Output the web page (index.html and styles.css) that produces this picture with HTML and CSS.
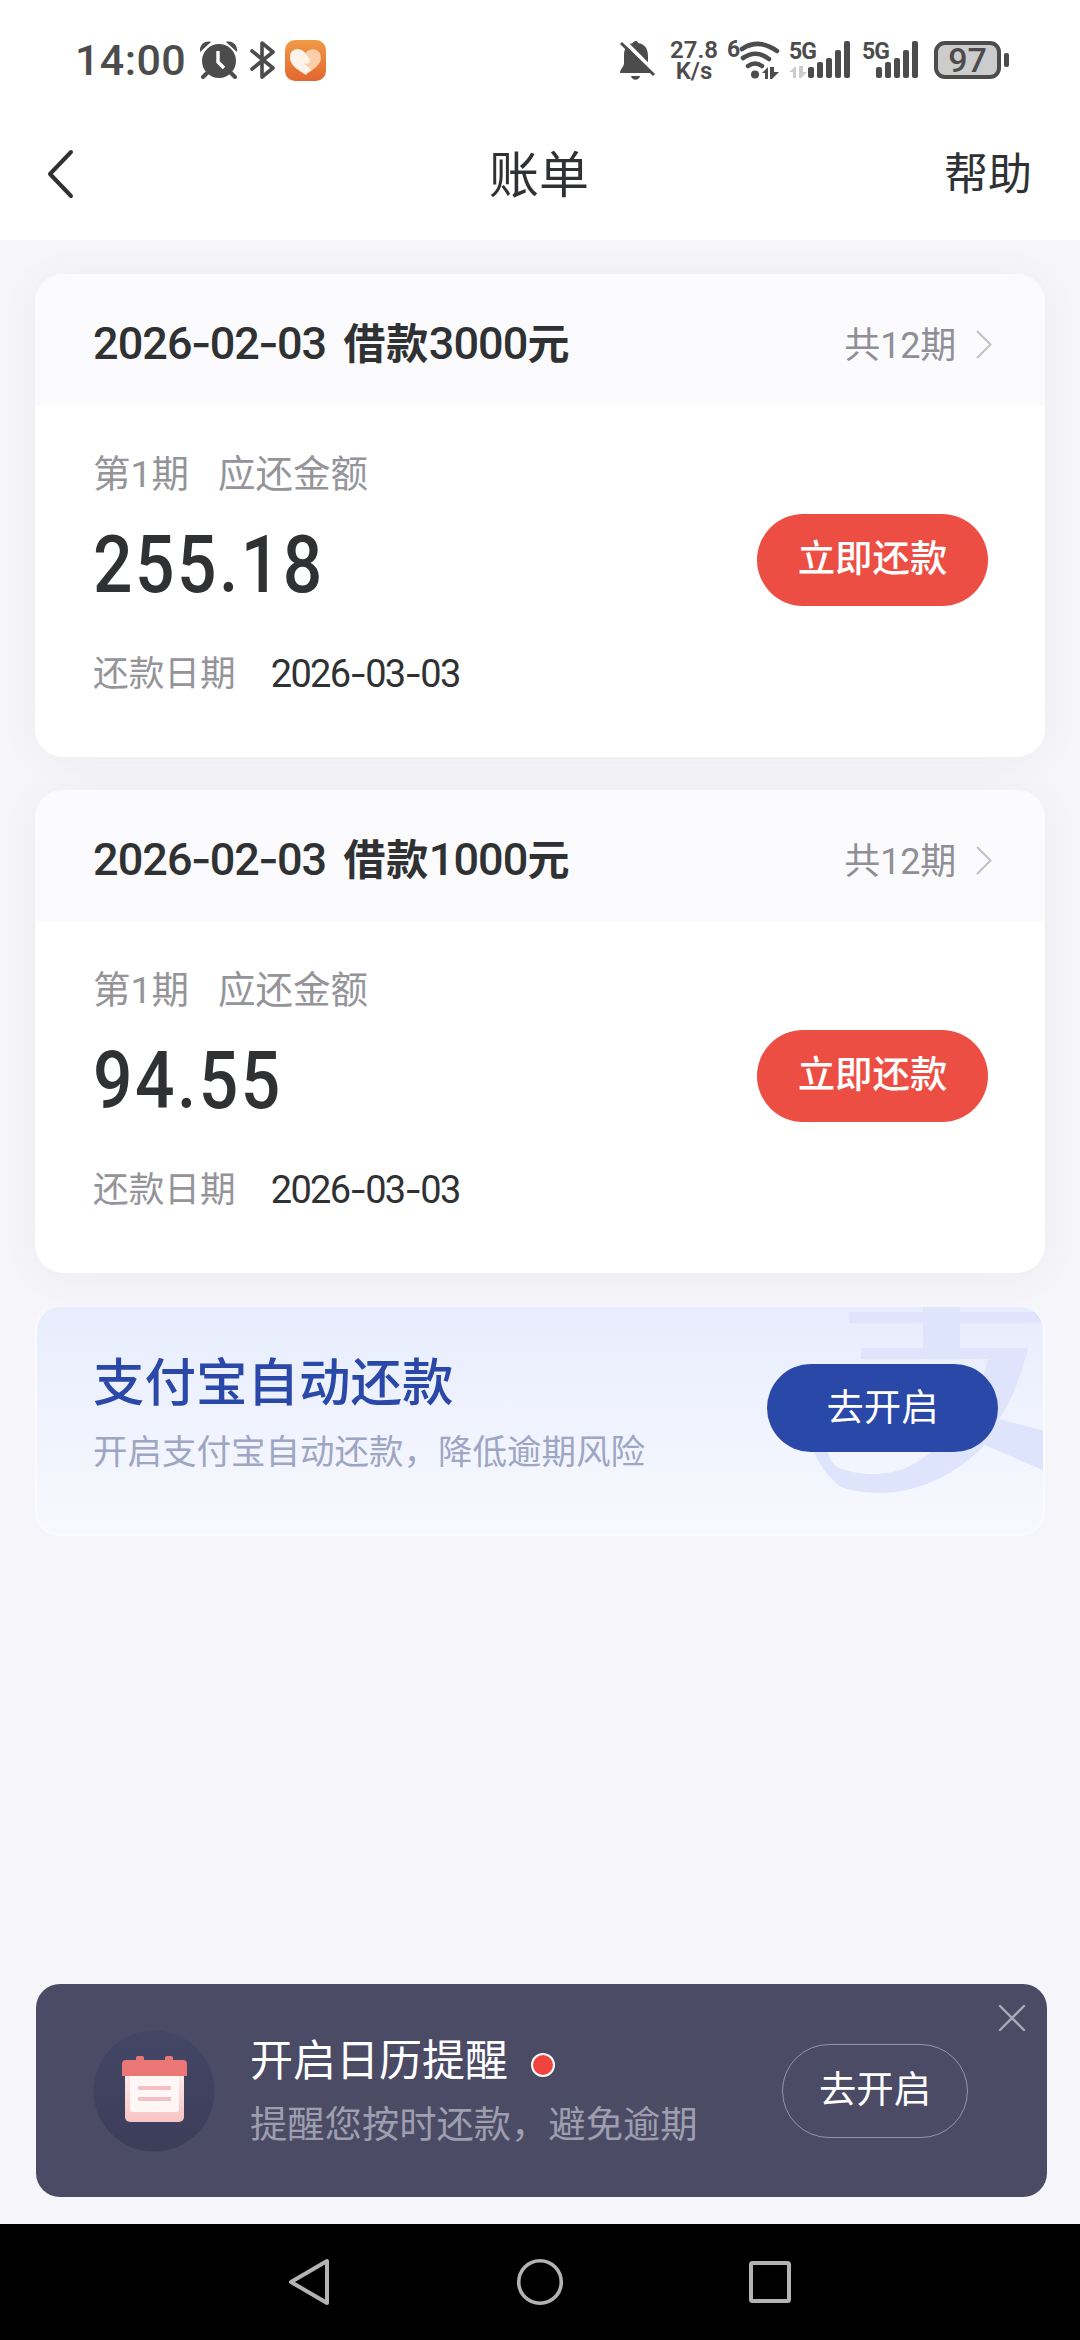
FILE: index.html
```html
<!DOCTYPE html>
<html lang="zh-CN">
<head>
<meta charset="utf-8">
<title>账单</title>
<link rel="stylesheet" href="styles.css">
</head>
<body>
<div class="screen">
  <div class="status">
    <span class="clock">14:00</span>
    <svg class="ic-alarm" width="38" height="38" viewBox="0 0 38 38">
      <g fill="#4c4c4c"><circle cx="19" cy="20" r="17"/><path d="M0 11C-1 4 5-1 11 1zM37 11C38 4 32-1 26 1z"/></g>
      <path d="M7 32l-4 4M31 32l4 4" stroke="#4c4c4c" stroke-width="4" stroke-linecap="round"/>
      <path d="M18 10v11l6 6" stroke="#fff" stroke-width="3.4" fill="none"/>
    </svg>
    <svg class="ic-bt" width="26" height="38" viewBox="0 0 26 38">
      <path d="M2 10l21 17-11 9V2l11 9L2 28" fill="none" stroke="#4c4c4c" stroke-width="3.6" stroke-linejoin="round" stroke-linecap="round"/>
    </svg>
    <svg class="ic-heart" width="41" height="41" viewBox="0 0 41 41">
      <defs><linearGradient id="hg" x1="0" y1="0" x2="0" y2="1"><stop offset="0" stop-color="#f19a46"/><stop offset="1" stop-color="#e2672f"/></linearGradient></defs>
      <rect width="41" height="41" rx="10" fill="url(#hg)"/>
      <path d="M20.500 13C25 7 36 8 36 18c0 6-8 12-15.500 17C13 30 5 25 5 17 5 8 16 7 20.500 13z" fill="#f9cfaa"/>
      <path d="M20.500 34C13 30 5 25 5 17 5 9 14 7 19 12l5 6c3 4-2 8-6 4l8 8z" fill="#fdf3ea"/>
    </svg>
    <span class="grow"></span>
    <svg class="ic-bell" width="38" height="40" viewBox="0 0 38 40">
      <path d="M17 1c1.500 0 2 1 2 2 7 1 10 6 10 13v7c0 5 5 6 5 10H1c0-4 4-6 4-10v-8C5 8 9 4 14 3c0-1 1-2 3-2zM12 36h9c-1 5-8 5-9 0z" fill="#4c4c4c"/>
      <path d="M3-1l36 36" stroke="#fff" stroke-width="4"/><path d="M2 3l33 32" stroke="#4c4c4c" stroke-width="3"/>
    </svg>
    <span class="rate"><span>27.8</span><span>K/s</span></span>
    <svg class="ic-wifi" width="54" height="42" viewBox="-2 0 54 42">
      <text x="-1" y="18" class="tiny">6</text>
      <g fill="none" stroke="#4c4c4c" stroke-width="4.600" stroke-linecap="round"><path d="M14 10Q31-1 49 12"/><path d="M15 19Q28 10 41 20"/><path d="M20 27Q27 22 34 27"/></g>
      <circle cx="27" cy="35.500" r="4" fill="#4c4c4c"/>
      <path d="M34 34l6-6v12h-3v-6zM42 28v12h2l7-7h-5v-5z" fill="#4c4c4c"/>
    </svg>
    <svg class="ic-sim1" width="62" height="42" viewBox="0 0 62 42">
      <text x="0" y="20" class="tiny">5G</text>
      <path d="M0 33l7-6v12H4v-6zM10 27v12h2l6-6h-4v-6z" fill="#ccc"/>
      <g fill="#4c4c4c"><rect x="19" y="28" width="6" height="11" rx="2"/><rect x="28" y="23" width="6" height="16" rx="2"/><rect x="37" y="19" width="6" height="20" rx="2"/><rect x="46" y="11" width="6" height="28" rx="2"/><rect x="55" y="2" width="6" height="37" rx="2"/></g>
    </svg>
    <svg class="ic-sim2" width="57" height="42" viewBox="0 0 57 42">
      <text x="0" y="20" class="tiny">5G</text>
      <g fill="#4c4c4c"><rect x="14" y="28" width="6" height="11" rx="2"/><rect x="23" y="23" width="6" height="16" rx="2"/><rect x="32" y="19" width="6" height="20" rx="2"/><rect x="41" y="11" width="6" height="28" rx="2"/><rect x="50" y="2" width="6" height="37" rx="2"/></g>
    </svg>
    <span class="battery">97</span><span class="nub"></span>
  </div>

  <header class="bar">
    <svg class="back" width="30" height="50" viewBox="0 0 30 50"><path d="M25 3L4 25l21 22" fill="none" stroke="#303133" stroke-width="4" stroke-linecap="round" stroke-linejoin="round"/></svg>
    <h1 class="title">账单</h1>
    <span class="help">帮助</span>
  </header>

  <main class="content">
    <section class="card">
      <div class="head">
        <h2 class="loan">2026<i>-</i>02<i>-</i>03 <b class="kind">借款</b>3000<b>元</b></h2>
        <span class="terms">共12期</span>
        <svg class="more" width="16" height="29" viewBox="0 0 16 29"><path d="M1 1l13.500 13.500L1 28" fill="none" stroke="#c0c0c5" stroke-width="2"/></svg>
      </div>
      <div class="body">
        <div class="info">
          <p class="label"><span>第1期</span><span>应还金额</span></p>
          <p class="amount">255.18</p>
          <p class="due"><span>还款日期</span><time>2026<i>-</i>03<i>-</i>03</time></p>
        </div>
        <button class="pay">立即还款</button>
      </div>
    </section>

    <section class="card">
      <div class="head">
        <h2 class="loan">2026<i>-</i>02<i>-</i>03 <b class="kind">借款</b>1000<b>元</b></h2>
        <span class="terms">共12期</span>
        <svg class="more" width="16" height="29" viewBox="0 0 16 29"><path d="M1 1l13.500 13.500L1 28" fill="none" stroke="#c0c0c5" stroke-width="2"/></svg>
      </div>
      <div class="body">
        <div class="info">
          <p class="label"><span>第1期</span><span>应还金额</span></p>
          <p class="amount">94.55</p>
          <p class="due"><span>还款日期</span><time>2026<i>-</i>03<i>-</i>03</time></p>
        </div>
        <button class="pay">立即还款</button>
      </div>
    </section>

    <section class="auto">
      <svg class="mark" width="230" height="200" viewBox="777 0 230 200">
        <path fill="#dde4fb" d="M813 5h74V0h37v5h85v11h-85v25h68C984 72 975 95 963 112L1009 124v40L949 138C915 172 875 187 840 186 825 185 812 183 805 180 793 171 784 159 777 143V130h10c4 14 6 24 14 30 22 10 54 9 73-1 38-20 66-62 78-107H825V41h62V16h-74z"/>
      </svg>
      <div class="auto-text">
        <h3>支付宝自动还款</h3>
        <p>开启支付宝自动还款，降低逾期风险</p>
      </div>
      <button class="enable">去开启</button>
    </section>
  </main>

  <aside class="remind">
    <svg class="cal" width="122" height="122" viewBox="0 0 122 122">
      <defs>
        <linearGradient id="cb" x1="0" y1="0" x2="0" y2="1"><stop offset="0" stop-color="#444666"/><stop offset="1" stop-color="#3b3d59"/></linearGradient>
        <linearGradient id="pg" x1="0" y1="0" x2="0" y2="1"><stop offset="0" stop-color="#fdeeec"/><stop offset="1" stop-color="#f7c3c3"/></linearGradient>
      </defs>
      <circle cx="61" cy="61" r="60.500" fill="url(#cb)"/>
      <rect x="32" y="40" width="59" height="52" rx="5" fill="url(#pg)"/>
      <rect x="37" y="42" width="49" height="40" rx="3" fill="#fff7f5"/>
      <path d="M33 30h10v-2q0-2 2-2h4q2 0 2 2v2h21v-2q0-2 2-2h4q2 0 2 2v2h10q4 0 4 4v12H29V34q0-4 4-4z" fill="#ea7775"/>
      <path d="M45 58h33M45 69h33" stroke="#f3c1c3" stroke-width="4"/>
    </svg>
    <div class="remind-text">
      <h3>开启日历提醒<span class="dot"></span></h3>
      <p>提醒您按时还款，避免逾期</p>
    </div>
    <button class="ghost">去开启</button>
    <svg class="close" width="28" height="28" viewBox="0 0 28 28"><path d="M2 2l24 24M26 2L2 26" stroke="#a9a9b8" stroke-width="2.400" stroke-linecap="round"/></svg>
  </aside>

  <nav class="nav">
    <svg width="48" height="50" viewBox="0 0 48 50"><path d="M41 4v42L5 25z" fill="none" stroke="#b3b3b3" stroke-width="4" stroke-linejoin="round"/></svg>
    <svg width="50" height="50" viewBox="0 0 50 50"><circle cx="25" cy="25" r="21.300" fill="none" stroke="#b3b3b3" stroke-width="3.600"/></svg>
    <svg width="48" height="50" viewBox="0 0 48 50"><rect x="5" y="6" width="38" height="38" rx="1.500" fill="none" stroke="#b3b3b3" stroke-width="4"/></svg>
  </nav>
</div>
</body>
</html>
```
FILE: styles.css
```css
* { box-sizing: border-box; margin: 0; padding: 0; }
body {
  width: 1080px;
  font-family: Roboto, "Noto Sans CJK SC", sans-serif;
  color: #303133;
  background: #f5f5fa;
}
svg { display: block; flex: none; overflow: hidden; }
button { border: 0; font-family: inherit; }
i { font-style: normal; font-family: Inter, sans-serif; }

.screen { width: 1080px; height: 2340px; display: flex; flex-direction: column; }

.status { height: 120px; padding: 0 71px 0 75px; display: flex; align-items: center; background: #fff; color: #4c4c4c; flex: none; }
.clock { width: 125px; font-size: 43px; font-weight: 500; letter-spacing: .4px; line-height: 60px; }
.ic-bt { margin-left: 12px; }
.ic-heart { margin-left: 9px; }
.grow { flex: 1; }
.rate { width: 54px; margin: 2px 5px 0 10px; display: flex; flex-direction: column; align-items: center; font-size: 24px; line-height: 21px; font-weight: 600; }
.tiny { font: 700 23px Roboto, sans-serif; fill: #4c4c4c; letter-spacing: -1px; }
.ic-sim1 { margin-left: 9px; }
.ic-sim2 { margin-left: 11px; }
.battery { width: 67px; height: 38px; margin-left: 15px; border: 4px solid #4c4c4c; border-radius: 11px; background: #ccc; text-align: center; font-size: 34px; line-height: 31px; font-weight: 500; }
.nub { width: 5px; height: 14px; margin-left: 3px; border-radius: 2px; background: #4c4c4c; }

.bar { height: 120px; padding: 0 48px 12px 46px; display: flex; align-items: center; justify-content: space-between; background: #fff; flex: none; }
.back { margin-right: 58px; }
.title { padding-top: 4px; font-size: 50px; font-weight: 400; line-height: 70px; }
.help { padding-top: 2px; font-size: 44px; line-height: 60px; }

.content { flex: 1; padding: 34px 35px 0; display: flex; flex-direction: column; gap: 33px; }
.card { height: 483px; flex: none; border-radius: 28px; background: #fff; box-shadow: 0 4px 44px rgba(40, 40, 40, .045); }
.head { height: 132px; padding: 8px 53px 0 58px; display: flex; align-items: center; border-radius: 28px 28px 0 0; background: #fbfbfd; }
.loan { flex: 1; font-size: 45px; font-weight: 500; line-height: 60px; letter-spacing: -.9px; white-space: pre; }
.loan i { margin: 0 -1px; }
.loan b { font-size: 42px; font-weight: 700; letter-spacing: .6px; }
.loan .kind { margin-left: 7px; }
.terms { padding-top: 3px; font-size: 36px; line-height: 50px; color: #8f8f95; letter-spacing: -.2px; }
.more { margin-left: 20px; }
.body { padding: 41px 57px 0 58px; display: flex; justify-content: space-between; align-items: flex-start; }
.label { display: flex; gap: 29px; font-size: 37.500px; line-height: 54px; color: #949499; }
.amount { width: 300px; margin-top: 17px; font-size: 79px; font-weight: 500; line-height: 94px; letter-spacing: 2.800px; transform: scaleX(.88); transform-origin: 0 50%; }
.due { margin-top: 34px; display: flex; align-items: center; gap: 35px; font-size: 35.700px; line-height: 54px; color: #949499; }
.due time { font-size: 38px; letter-spacing: -1.700px; color: #303133; }
.pay { width: 231px; height: 92px; margin-top: 67px; padding-bottom: 8px; border-radius: 46px; background: #ec4e44; color: #fff; font-size: 37.400px; font-weight: 500; }

.auto { position: relative; height: 229px; margin-top: 1px; padding: 41px 45px 0 56px; display: flex; align-items: flex-start; justify-content: space-between; border: 2px solid #fafbff; border-top: 0; border-radius: 24px; overflow: hidden; background: linear-gradient(#e7edfd, #f0f3fe 50%, #f8f9fe); }
.mark { position: absolute; right: 0; top: 0; }
.auto-text { position: relative; }
.auto h3 { font-size: 51.500px; line-height: 72px; font-weight: 500; color: #2a48a8; }
.auto p { margin-top: 2px; font-size: 34.500px; line-height: 60px; color: #9ea6c3; }
.enable { position: relative; width: 231px; height: 88px; margin-top: 16px; padding-bottom: 6px; border-radius: 44px; background: #2a48a8; color: #fff; font-size: 37.400px; }

.remind { position: relative; width: 1011px; height: 213px; margin: 0 0 27px 36px; padding: 0 79px 0 57px; display: flex; align-items: center; flex: none; border-radius: 24px; background: #4b4b66; color: #fff; }
.remind-text { flex: 1; margin-left: 35px; padding-top: 4px; }
.remind h3 { display: flex; align-items: center; font-size: 43px; line-height: 64px; font-weight: 400; }
.dot { width: 24px; height: 24px; margin: 8px 0 0 23px; border: 2px solid #fff; border-radius: 50%; background: #f0443f; }
.remind p { font-size: 37.300px; line-height: 64px; color: #9e9eae; }
.ghost { width: 186px; height: 94px; padding-bottom: 8px; border: 1px solid #9494a6; border-radius: 47px; background: none; color: #fff; font-size: 37.400px; }
.close { position: absolute; right: 21px; top: 20px; }

.nav { height: 116px; flex: none; display: flex; justify-content: center; align-items: center; gap: 181px; background: #000; }
```
